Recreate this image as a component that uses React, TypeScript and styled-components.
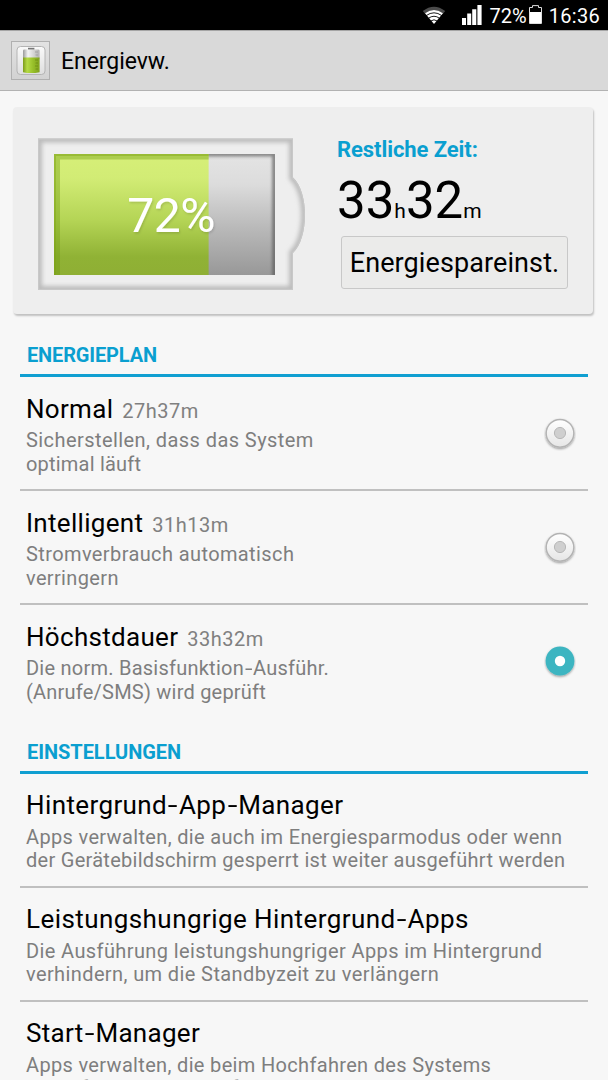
import React from "react";
import styled, { createGlobalStyle } from "styled-components";

const Global = createGlobalStyle`
  html, body { margin: 0; padding: 0; background: #f7f7f7; }
  body { overflow: hidden; font-family: Roboto, "Liberation Sans", sans-serif; color: #000; }
  * { box-sizing: border-box; }
`;

const Screen = styled.div`
  width: 608px;
  height: 1080px;
  overflow: hidden;
  background: #f7f7f7;
  display: flex;
  flex-direction: column;
`;

const StatusBar = styled.div`
  flex: none;
  height: 30px;
  background: #000;
  color: #fff;
  display: flex;
  justify-content: flex-end;
  align-items: center;
  padding-right: 8px;
  font-size: 20px;
  line-height: 32px;
  svg { display: block; }
`;

const SignalSlot = styled.div`
  margin-left: 16px;
`;

const BatterySlot = styled.div`
  margin-left: 2px;
  padding-bottom: 2px;
`;

const StatusText = styled.span<{ $ls?: number; $ml?: number }>`
  white-space: nowrap;
  letter-spacing: ${(p) => p.$ls ?? 0}px;
  margin-left: ${(p) => p.$ml ?? 0}px;
  padding-top: 2px;
`;

const TitleBar = styled.header`
  flex: none;
  height: 61px;
  background: #d9d9d9;
  border-top: 1px solid #a5a5a5;
  border-bottom: 1px solid #b2b2b2;
  display: flex;
  align-items: center;
  padding-left: 11px;
  gap: 11px;
`;

const AppIcon = styled.div`
  width: 39px;
  height: 39px;
  border: 1px solid #b0b0b0;
  background: linear-gradient(#e3e3e3, #d2d2d2);
  display: flex;
  align-items: center;
  justify-content: center;
  svg { display: block; }
`;

const AppTitle = styled.h1`
  margin: 0;
  padding-top: 2px;
  font-weight: 400;
  font-size: 23px;
  line-height: 30px;
  letter-spacing: -0.05px;
`;

const Card = styled.section`
  flex: none;
  margin: 16px 15px 0 13px;
  height: 207px;
  border-radius: 4px;
  background: #eeeeee;
  box-shadow: 1px 2px 2px rgba(0, 0, 0, 0.22);
  display: flex;
`;

const Gauge = styled.div`
  flex: none;
  width: 324px;
  padding: 29px 0 0 23px;
  svg { display: block; }
`;

const Summary = styled.div`
  display: flex;
  flex-direction: column;
  align-items: flex-start;
`;

const SummaryLabel = styled.div`
  margin-top: 30px;
  font-size: 22px;
  line-height: 26px;
  font-weight: 700;
  letter-spacing: -0.08px;
  color: #0a9fd0;
  white-space: nowrap;
`;

const Remaining = styled.div`
  margin-top: 9px;
  height: 58px;
  display: flex;
  align-items: baseline;
  line-height: 58px;
  white-space: nowrap;
`;

const Digits = styled.span`
  font-size: 51px;
`;

const Unit = styled.span`
  font-size: 21px;
`;

const SaveButton = styled.button`
  margin: 6px 0 0 4px;
  width: 227px;
  height: 53px;
  padding: 0;
  border: 1px solid #c8c8c8;
  border-radius: 3px;
  background: #ebebea;
  font: 400 27px/32px Roboto, "Liberation Sans", sans-serif;
  letter-spacing: 0.1px;
  color: #000;
  white-space: nowrap;
`;

const List = styled.section<{ $top: number }>`
  flex: none;
  margin: ${(p) => p.$top}px 20px 0;
`;

const SectionTitle = styled.h2<{ $ls: number }>`
  margin: 0;
  height: 37px;
  padding: 3px 0 0 7px;
  border-bottom: 3px solid #109fd1;
  font-size: 20px;
  line-height: 24px;
  font-weight: 700;
  letter-spacing: ${(p) => p.$ls}px;
  color: #0a9fd0;
`;

const Row = styled.div<{ $last?: boolean }>`
  height: 114px;
  padding: 15px 12px 0 6px;
  display: flex;
  justify-content: space-between;
  border-bottom: ${(p) => (p.$last ? "0" : "2px solid #c0c0c0")};
`;

const RowText = styled.div`
  flex: none;
`;

const RowTitle = styled.div<{ $ls: number; $drop: number }>`
  height: 36px;
  padding-top: ${(p) => p.$drop}px;
  font-size: 26px;
  line-height: 32px;
  letter-spacing: ${(p) => p.$ls}px;
  white-space: nowrap;
`;

const Duration = styled.span`
  margin-left: 9px;
  font-size: 20px;
  letter-spacing: 0.5px;
  color: #808080;
`;

const Line = styled.div<{ $ls: number; $pitch: number }>`
  font-size: 20px;
  line-height: 24px;
  height: ${(p) => p.$pitch}px;
  letter-spacing: ${(p) => p.$ls}px;
  color: #7e7e7e;
  white-space: nowrap;
`;

const WideDash = styled.span`
  display: inline-block;
  letter-spacing: 0;
  margin: 0 0.09em;
  transform: scaleX(1.35);
`;

const RadioSlot = styled.div`
  flex: none;
  padding-top: 25px;
  svg { display: block; }
`;

const WifiIcon = () => (
  <svg width="24" height="18" viewBox="0 0 24 18">
    <path d="M0.8 5 Q12 -3.5 23.2 5 L21.2 7.4 Q12 0.6 2.8 7.4Z" fill="#4b4b4b" />
    <path d="M3 7.2 Q12 0.7 21 7.2 L12 18Z" fill="#fff" />
    <path d="M4.2 9.6 Q12 4 19.8 9.6M6.4 12.3 Q12 8.2 17.6 12.3M8.8 15 Q12 12.6 15.2 15" stroke="#000" strokeWidth="0.9" fill="none" />
  </svg>
);

const SignalIcon = () => (
  <svg width="20" height="20" viewBox="0 0 20 20">
    <path d="M0 13h4v7H0zM5.2 8.5h4V20h-4zM10.2 4.2h4.1V20h-4.1zM15.4 0h4.2v20h-4.2z" fill="#fff" />
  </svg>
);

const StatusBattery = () => (
  <svg width="13" height="19" viewBox="0 0 13 19">
    <path d="M0.5 18.5V2.5H3.5V0.6H9.5V2.5H12.5V18.5Z" fill="#000" stroke="#ddd" />
    <path d="M1 7H12V18H1z" fill="#fff" />
  </svg>
);

const BatteryAppIcon = () => (
  <svg width="30" height="31" viewBox="0 0 30 31">
    <defs>
      <linearGradient id="tile" x1="0" y1="0" x2="0" y2="1">
        <stop offset="0" stopColor="#fafafa" />
        <stop offset="1" stopColor="#dedede" />
      </linearGradient>
      <linearGradient id="cellGreen">
        <stop offset="0" stopColor="#7d9b1c" />
        <stop offset="0.25" stopColor="#b5da45" />
        <stop offset="0.6" stopColor="#98c02a" />
        <stop offset="1" stopColor="#7fa11c" />
      </linearGradient>
      <linearGradient id="cellTop">
        <stop offset="0" stopColor="#9a9a9a" />
        <stop offset="0.3" stopColor="#f4f4f4" />
        <stop offset="0.7" stopColor="#cfcfcf" />
        <stop offset="1" stopColor="#b0b0b0" />
      </linearGradient>
    </defs>
    <rect x="1" y="1.5" width="28" height="28" rx="3.5" fill="url(#tile)" stroke="#b4b4b4" />
    <rect x="12" y="2.8" width="6.4" height="2" fill="#777" />
    <rect x="7" y="4.4" width="16.6" height="10" rx="1.4" fill="url(#cellTop)" />
    <path d="M7 12.4H23.6V27.2Q15 29 7 27.2Z" fill="url(#cellGreen)" />
    <path d="M19 7h3M19.6 10h2.4" stroke="#999" strokeWidth="0.8" />
    <path d="M19 15h3M19.6 18h2.4M19 21h3M19.6 24h2.4" stroke="#6b8a12" strokeWidth="0.8" />
  </svg>
);

const BatteryGauge = ({ percent }: { percent: number }) => {
  const shell = "M2 2.5H257V41.5C273 56 273 102 257 117V154H2Z";
  const fill = (221 * percent) / 100 - 4.5;
  return (
    <svg width="274" height="158" viewBox="0 0 274 158">
      <defs>
        <linearGradient id="charge" x1="0" y1="0" x2="0" y2="1">
          <stop offset="0" stopColor="#d6ef78" />
          <stop offset="0.2" stopColor="#d2ec75" />
          <stop offset="0.55" stopColor="#b4d455" />
          <stop offset="0.85" stopColor="#90b235" />
          <stop offset="1" stopColor="#8faf34" />
        </linearGradient>
        <linearGradient id="empty" x1="0" y1="0" x2="0" y2="1">
          <stop offset="0" stopColor="#e4e4e4" />
          <stop offset="0.25" stopColor="#dcdcdc" />
          <stop offset="0.6" stopColor="#bababa" />
          <stop offset="1" stopColor="#989898" />
        </linearGradient>
        <clipPath id="shellClip"><path d={shell} /></clipPath>
        <clipPath id="cellClip"><rect x="18" y="18" width="221" height="121" /></clipPath>
        <filter id="soft" x="-10%" y="-10%" width="120%" height="120%"><feGaussianBlur stdDeviation="2" /></filter>
        <filter id="edge" x="-10%" y="-10%" width="120%" height="120%"><feGaussianBlur stdDeviation="1.4" /></filter>
        <filter id="textShade" x="-10%" y="-20%" width="130%" height="150%">
          <feDropShadow dx="1" dy="1.5" stdDeviation="0.8" floodColor="#000" floodOpacity="0.14" />
        </filter>
      </defs>
      <g clipPath="url(#shellClip)">
        <path d={shell} fill="#eeeeee" />
        <path d={shell} fill="none" stroke="#bcbcbc" strokeWidth="8" filter="url(#soft)" />
        <path d={shell} fill="none" stroke="#c8c8c8" strokeWidth="2.4" />
      </g>
      <g clipPath="url(#cellClip)">
        <rect x="18" y="18" width="221" height="121" fill="url(#empty)" />
        <path d="M16 18H238.5V141" fill="none" stroke="#555" strokeWidth="5" opacity="0.65" filter="url(#edge)" />
        <rect x="18" y="18" width={fill} height="121" fill="url(#charge)" />
        <path d={`M18 18H${18 + fill}V23.5H24V139H18Z`} fill="#6f9a10" opacity="0.4" />
        <path d={`M18 18H${18 + fill}V20H20V139H18Z`} fill="#7aa010" opacity="0.4" />
      </g>
      <text x="91.3" y="96" fontSize="48" fontFamily="Roboto, sans-serif" textLength="88" fill="#fff" filter="url(#textShade)">
        {percent}%
      </text>
    </svg>
  );
};

const Radio = ({ on }: { on?: boolean }) => (
  <svg width="32" height="34" viewBox="0 0 32 34">
    <defs>
      <linearGradient id="knob" x1="0" y1="0" x2="0" y2="1">
        <stop offset="0" stopColor="#ffffff" />
        <stop offset="1" stopColor="#e6e6e6" />
      </linearGradient>
      <filter id="knobShade" x="-20%" y="-20%" width="140%" height="150%">
        <feDropShadow dx="0" dy="1.2" stdDeviation="0.8" floodColor="#000" floodOpacity="0.4" />
      </filter>
    </defs>
    {on ? (
      <>
        <circle cx="16" cy="16" r="14.4" fill="#3eb5c1" filter="url(#knobShade)" />
        <circle cx="16" cy="16" r="5.2" fill="#fff" />
      </>
    ) : (
      <>
        <circle cx="16" cy="16.3" r="13.8" fill="url(#knob)" stroke="#b3b3b3" strokeWidth="1.4" filter="url(#knobShade)" />
        <circle cx="16" cy="16" r="5.6" fill="#cfcfcf" stroke="#b2b2b2" strokeWidth="0.9" />
      </>
    )}
  </svg>
);

type Text = { text: string; ls: number };
type Item = { title: Text; time?: string; lines: Text[]; on?: boolean };

const plans: Item[] = [
  { title: { text: "Normal", ls: 0.3 }, time: "27h37m", lines: [{ text: "Sicherstellen, dass das System", ls: 0.43 }, { text: "optimal läuft", ls: 0.2 }] },
  { title: { text: "Intelligent", ls: 0.3 }, time: "31h13m", lines: [{ text: "Stromverbrauch automatisch", ls: 0.39 }, { text: "verringern", ls: 0.35 }] },
  { title: { text: "Höchstdauer", ls: 0.3 }, time: "33h32m", on: true, lines: [{ text: "Die norm. Basisfunktion-Ausführ.", ls: 0.24 }, { text: "(Anrufe/SMS) wird geprüft", ls: 0.22 }] },
];

const settings: Item[] = [
  { title: { text: "Hintergrund-App-Manager", ls: 0.39 }, lines: [{ text: "Apps verwalten, die auch im Energiesparmodus oder wenn", ls: 0.34 }, { text: "der Gerätebildschirm gesperrt ist weiter ausgeführt werden", ls: 0.28 }] },
  { title: { text: "Leistungshungrige Hintergrund-Apps", ls: 0.43 }, lines: [{ text: "Die Ausführung leistungshungriger Apps im Hintergrund", ls: 0.39 }, { text: "verhindern, um die Standbyzeit zu verlängern", ls: 0.39 }] },
  { title: { text: "Start-Manager", ls: 0.3 }, lines: [{ text: "Apps verwalten, die beim Hochfahren des Systems", ls: 0.33 }, { text: "ausgeführt werden dürfen", ls: 0.2 }] },
];

const Dashed = ({ text }: { text: string }) => (
  <>
    {text.split("-").map((part, i) => (
      <React.Fragment key={i}>
        {i > 0 && <WideDash>-</WideDash>}
        {part}
      </React.Fragment>
    ))}
  </>
);

const ItemRow = ({ item, last, selectable }: { item: Item; last: boolean; selectable?: boolean }) => (
  <Row $last={last}>
    <RowText>
      <RowTitle $ls={item.title.ls} $drop={selectable ? 1 : 0}>
        <Dashed text={item.title.text} />
        {item.time && <Duration>{item.time}</Duration>}
      </RowTitle>
      {item.lines.map((l) => (
        <Line key={l.text} $ls={l.ls} $pitch={selectable ? 23.6 : 23}><Dashed text={l.text} /></Line>
      ))}
    </RowText>
    {selectable && <RadioSlot><Radio on={item.on} /></RadioSlot>}
  </Row>
);

export default function App() {
  return (
    <>
      <Global />
      <Screen>
        <StatusBar>
          <WifiIcon />
          <SignalSlot><SignalIcon /></SignalSlot>
          <StatusText $ml={8}>72%</StatusText>
          <BatterySlot><StatusBattery /></BatterySlot>
          <StatusText $ml={7} $ls={0.3}>16:36</StatusText>
        </StatusBar>
        <TitleBar>
          <AppIcon><BatteryAppIcon /></AppIcon>
          <AppTitle>Energievw.</AppTitle>
        </TitleBar>
        <Card>
          <Gauge><BatteryGauge percent={72} /></Gauge>
          <Summary>
            <SummaryLabel>Restliche Zeit:</SummaryLabel>
            <Remaining>
              <Digits>33</Digits><Unit>h</Unit><Digits>32</Digits><Unit>m</Unit>
            </Remaining>
            <SaveButton>Energiespareinst.</SaveButton>
          </Summary>
        </Card>
        <List $top={26}>
          <SectionTitle $ls={-0.15}>ENERGIEPLAN</SectionTitle>
          {plans.map((p, i) => <ItemRow key={p.title.text} item={p} last={i === plans.length - 1} selectable />)}
        </List>
        <List $top={18}>
          <SectionTitle $ls={-0.05}>EINSTELLUNGEN</SectionTitle>
          {settings.map((s, i) => <ItemRow key={s.title.text} item={s} last={i === settings.length - 1} />)}
        </List>
      </Screen>
    </>
  );
}
